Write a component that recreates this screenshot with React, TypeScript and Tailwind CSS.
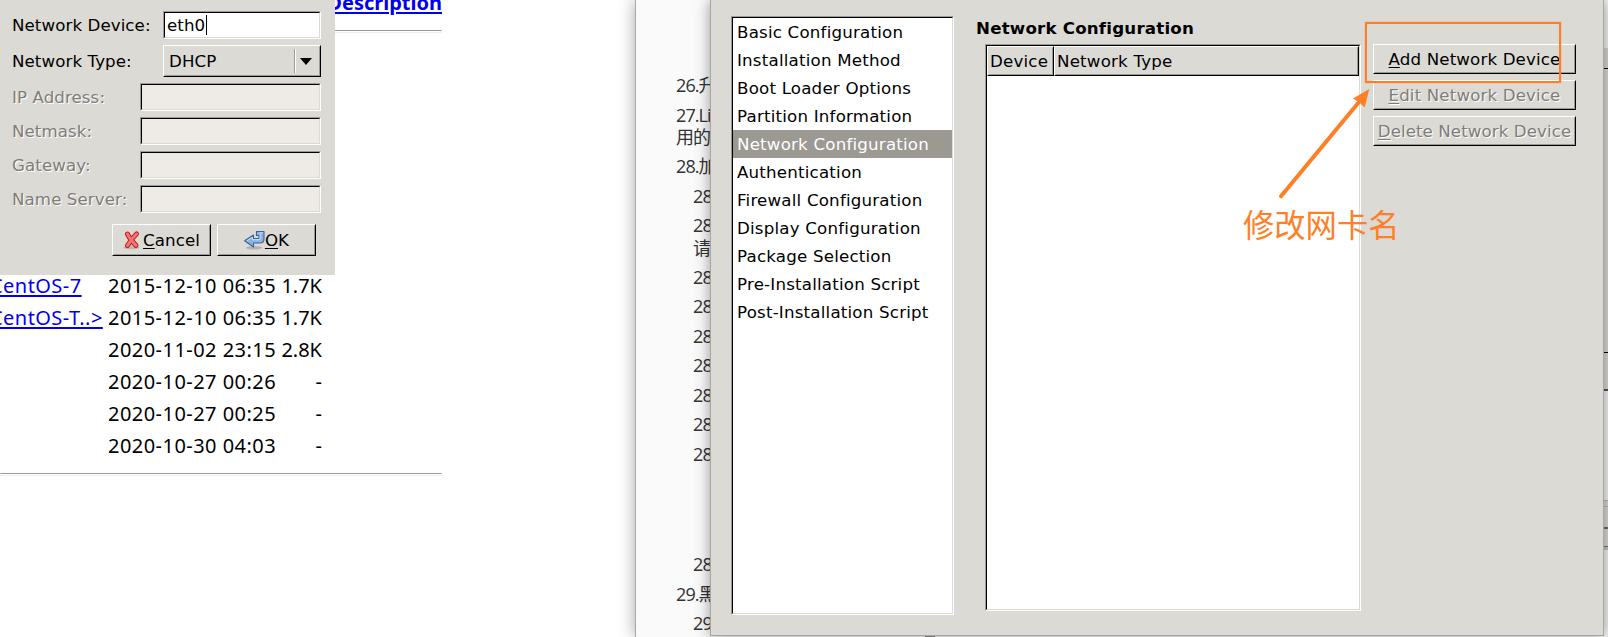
import React from "react";

const NAV = [
  "Basic Configuration",
  "Installation Method",
  "Boot Loader Options",
  "Partition Information",
  "Network Configuration",
  "Authentication",
  "Firewall Configuration",
  "Display Configuration",
  "Package Selection",
  "Pre-Installation Script",
  "Post-Installation Script",
];

const FILES = [
  { name: "CentOS-7", date: "2015-12-10 06:35", size: "1.7K" },
  { name: "CentOS-T..>", date: "2015-12-10 06:35", size: "1.7K" },
  { name: "", date: "2020-11-02 23:15", size: "2.8K" },
  { name: "", date: "2020-10-27 00:26", size: "-" },
  { name: "", date: "2020-10-27 00:25", size: "-" },
  { name: "", date: "2020-10-30 04:03", size: "-" },
];

const NOTES: { text: string; cls: string }[] = [
  { text: "26.升", cls: "h-[30px]" },
  { text: "27.Li", cls: "h-[22px]" },
  { text: "用的", cls: "h-[29px]" },
  { text: "28.加", cls: "h-[30px]" },
  { text: "28", cls: "h-[29px] pl-[17px]" },
  { text: "28", cls: "h-[23px] pl-[17px]" },
  { text: "请", cls: "h-[29px] pl-[17px]" },
  { text: "28", cls: "h-[29px] pl-[17px]" },
  { text: "28", cls: "h-[30px] pl-[17px]" },
  { text: "28", cls: "h-[29px] pl-[17px]" },
  { text: "28", cls: "h-[30px] pl-[17px]" },
  { text: "28", cls: "h-[29px] pl-[17px]" },
  { text: "28", cls: "h-[30px] pl-[17px]" },
  { text: "28", cls: "h-[110px] pl-[17px]" },
  { text: "28", cls: "h-[30px] pl-[17px]" },
  { text: "29.黑", cls: "h-[29px]" },
  { text: "29", cls: "h-[29px] pl-[17px]" },
];

function Sunken({ className, children }: { className: string; children?: React.ReactNode }) {
  return (
    <div className={`flex border border-t-[#9c9a93] border-l-[#9c9a93] border-r-white border-b-white ${className}`}>
      <div className="flex min-w-0 flex-1 flex-col border border-t-black border-l-black border-r-[#dcdad5] border-b-[#dcdad5]">
        {children}
      </div>
    </div>
  );
}

function Raised({ className, children }: { className: string; children?: React.ReactNode }) {
  return (
    <div className={`flex border border-t-white border-l-white border-r-black border-b-black ${className}`}>
      <div className="flex min-w-0 flex-1 items-center justify-center border border-t-[#dcdad5] border-l-[#dcdad5] border-r-[#9c9a93] border-b-[#9c9a93]">
        {children}
      </div>
    </div>
  );
}

function Mnemonic({ text }: { text: string }) {
  return (
    <span className="pt-[2px] whitespace-nowrap">
      <span className="underline decoration-1 underline-offset-[2px]">{text[0]}</span>
      {text.slice(1)}
    </span>
  );
}

function Label({ text, off }: { text: string; off?: boolean }) {
  return (
    <div className={`flex-1 pt-[2px] whitespace-nowrap ${off ? "text-[#7f7d78] [text-shadow:1px_1px_0_#fff]" : ""}`}>
      {text}
    </div>
  );
}

function CancelIcon() {
  return (
    <svg width="20" height="20" viewBox="0 0 20 20">
      <ellipse cx="8.500" cy="17.500" rx="8" ry="1.800" fill="#000" opacity="0.15" />
      <g fill="none" strokeLinecap="round" strokeLinejoin="round">
        <path d="M4.500 4Q6 8 13 15.500M13.500 4Q9 8 4.500 15.500" stroke="#c8191f" strokeWidth="5" />
        <path d="M4.500 4Q6 8 13 15.500M13.500 4Q9 8 4.500 15.500" stroke="#f47575" strokeWidth="3" />
      </g>
    </svg>
  );
}

function OkIcon() {
  return (
    <svg width="21" height="20" viewBox="0 0 21 20">
      <ellipse cx="10" cy="17.800" rx="8" ry="1.800" fill="#000" opacity="0.18" />
      <path
        d="M12.500 1.500h7.500v7.500q0 4-4 4H9.500V17L.6 10.800 9.500 5V8.500h4.500q1 0 1-1V5.500h-2.500z"
        fill="#8fb3dc"
        stroke="#34659f"
        strokeWidth="1.100"
        strokeLinejoin="round"
      />
      <path d="M3 10.700L8.500 7.200V9.700H15q1.200 0 1.200-1.200V2.800H19" stroke="#cfe0f2" strokeWidth="1" fill="none" />
    </svg>
  );
}

function Listing() {
  return (
    <div className="absolute inset-y-0 left-0 w-[635px] overflow-hidden bg-white font-['Noto_Sans','Open_Sans',sans-serif] text-[20px] leading-[32px] tracking-normal text-black">
      <div className="flex h-[30px] w-[442px] items-start justify-end">
        <a className="mt-[-13px] font-bold text-[#0000ee] underline decoration-2 underline-offset-[2px]">Description</a>
      </div>
      <div className="h-[3px] w-[442px] border border-[#eee] border-t-[#9a9a9a]" />
      <div className="mt-[237px] flex flex-col">
        {FILES.map((f, i) => (
          <div key={i} className="flex h-8 w-[322px] whitespace-nowrap">
            <div className="w-[108px]">
              <a className="ml-[-10px] tracking-[0.45px] text-[#0000ee] underline decoration-2 underline-offset-[2px]">
                {f.name}
              </a>
            </div>
            <div className="w-[168px] tracking-[0.46px]">{f.date}</div>
            <div className="flex-1 text-right">{f.size}</div>
          </div>
        ))}
      </div>
      <div className="mt-[11px] h-[3px] w-[442px] border border-[#eee] border-t-[#9a9a9a]" />
    </div>
  );
}

function Notes() {
  return (
    <div className="absolute inset-y-0 right-0 left-[635px] overflow-hidden border-l border-[#a8a8aa] bg-[#fafafa] pt-[72px] pl-[40px] font-['Open_Sans','Noto_Sans_CJK_SC',sans-serif] text-[18px] leading-[26px] tracking-[-0.9px] text-[#333] shadow-[0_0_16px_rgba(0,0,0,0.35)]">
      {NOTES.map((n, i) => (
        <div key={i} className={`whitespace-nowrap ${n.cls}`}>
          {n.text}
        </div>
      ))}
    </div>
  );
}

function BackWindowEdge() {
  return (
    <div className="absolute top-0 right-0 flex h-[637px] w-[8px] flex-col bg-[#f4f4f4]">
      <div className="h-[48px]" />
      <div className="h-[21px] border-b border-black bg-[#d6d5d0]" />
      <div className="h-[284px] border-b border-black bg-[#dcdad5]" />
      <div className="h-[38px] border-b-2 border-[#55534e] bg-[#dcdad5]" />
      <div className="h-[109px]" />
      <div className="h-[7px] border-y border-[#b5b5b5] bg-[#d8d8d8]" />
      <div className="h-[22px] border-b-2 border-[#6b6964] bg-[#dcdad5]" />
      <div className="h-[18px] border-b border-[#77756f] bg-[#dcdad5]" />
      <div className="h-[3px] bg-[#c4c4c2]" />
    </div>
  );
}

function DeviceDialog() {
  return (
    <div className="absolute top-0 left-0 flex h-[275px] w-[335px] flex-col gap-[6px] bg-[#dcdad5] pt-[11px] pr-[14px] pl-3 tracking-[0.08px]">
      <div className="flex h-7 items-center">
        <Label text="Network Device:" />
        <Sunken className="h-7 w-[158px] bg-white">
          <div className="flex h-6 items-center pl-[2px]">
            <span className="pt-[2px]">eth0</span>
            <span className="ml-px h-5 w-px bg-black" />
          </div>
        </Sunken>
      </div>
      <div className="flex h-8 items-center">
        <Label text="Network Type:" />
        <Raised className="h-8 w-[158px]">
          <div className="flex-1 pt-[2px] pl-1">DHCP</div>
          <div className="mr-1 h-6 w-[2px] border-r border-l border-r-white border-l-[#9c9a93]" />
          <svg width="12" height="7" viewBox="0 0 12 7" className="mr-[7px]">
            <path d="M0 0h12L6 7z" />
          </svg>
        </Raised>
      </div>
      {["IP Address:", "Netmask:", "Gateway:", "Name Server:"].map((t) => (
        <div key={t} className="flex h-7 items-center">
          <Label text={t} off />
          <Sunken className="h-7 w-[181px] bg-[#eeebe7]" />
        </div>
      ))}
      <div className="mt-[5px] mr-[5px] flex justify-end gap-[6px]">
        <Raised className="h-8 w-[99px]">
          <CancelIcon />
          <Mnemonic text="Cancel" />
        </Raised>
        <Raised className="h-8 w-[99px]">
          <OkIcon />
          <Mnemonic text="OK" />
        </Raised>
      </div>
    </div>
  );
}

function Configurator() {
  return (
    <div className="absolute top-0 left-[710px] flex h-[636px] w-[894px] border border-t-0 border-[#a6a6a4] bg-[#dcdad5] pt-4 pl-5 shadow-[0_0_14px_rgba(0,0,0,0.4)]">
      <Sunken className="h-[599px] w-[223px] shrink-0 bg-white">
        {NAV.map((n) => (
          <div
            key={n}
            className={`h-7 pl-1 leading-[30px] whitespace-nowrap ${n === "Network Configuration" ? "bg-[#9b9992] text-white" : ""}`}
          >
            {n}
          </div>
        ))}
      </Sunken>
      <div className="ml-[22px] flex w-[385px] shrink-0 flex-col">
        <div className="h-7 leading-[26px] font-bold whitespace-nowrap">Network Configuration</div>
        <Sunken className="ml-[9px] h-[567px] w-[376px] bg-white">
          <div className="flex h-[30px] bg-[#dcdad5]">
            <Raised className="w-[67px]">
              <div className="flex-1 pt-[2px] pl-px">Device</div>
            </Raised>
            <Raised className="flex-1">
              <div className="flex-1 pt-[2px] pl-px">Network Type</div>
            </Raised>
          </div>
        </Sunken>
      </div>
      <div className="mt-7 ml-3 flex w-[203px] shrink-0 flex-col gap-[6px] tracking-[0.14px]">
        <Raised className="h-[30px]">
          <Mnemonic text="Add Network Device" />
        </Raised>
        <Raised className="h-[30px] text-[#7f7d78] [text-shadow:1px_1px_0_#fff]">
          <Mnemonic text="Edit Network Device" />
        </Raised>
        <Raised className="h-[30px] tracking-[0.08px] text-[#7f7d78] [text-shadow:1px_1px_0_#fff]">
          <Mnemonic text="Delete Network Device" />
        </Raised>
      </div>
    </div>
  );
}

export default function App() {
  return (
    <div className="relative h-[637px] w-[1608px] overflow-hidden bg-white font-['DejaVu_Sans',sans-serif] text-[16.67px] leading-[20px] tracking-[0.2px] text-black">
      <Listing />
      <Notes />
      <BackWindowEdge />
      <DeviceDialog />
      <Configurator />
      <div className="absolute top-[636px] left-[925px] h-px w-[10px] bg-[#777]" />
      <div className="absolute top-[22px] left-[1365px] h-[61px] w-[196px] border-2 border-[#ff7f27] shadow-[0_0_1px_#ff7f27]" />
      <svg className="absolute top-[80px] left-[1270px]" width="110" height="125" viewBox="0 0 110 125">
        <path d="M11 116.300L89 22" stroke="#ff7f27" strokeWidth="4" strokeLinecap="round" />
        <path d="M99.300 9L94.700 27.500 89.500 22.500 83 18.500z" fill="#ff7f27" />
      </svg>
      <div className="absolute top-[202px] left-[1243px] font-['Noto_Sans_CJK_SC',sans-serif] text-[31.3px] leading-[44px] tracking-normal whitespace-nowrap text-[#ff7f27]">
        修改网卡名
      </div>
    </div>
  );
}
